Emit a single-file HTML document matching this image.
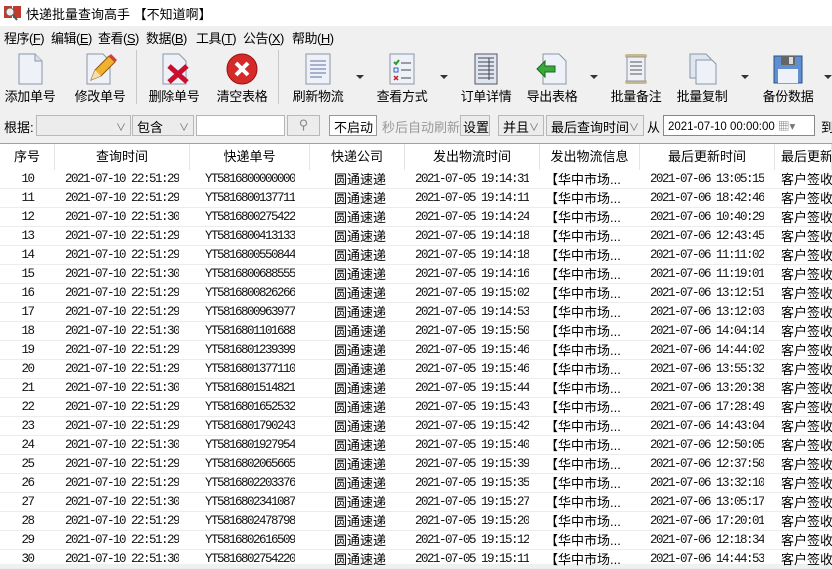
<!DOCTYPE html>
<html><head><meta charset="utf-8"><style>
*{margin:0;padding:0;box-sizing:border-box}
body{width:832px;height:564px;overflow:hidden;background:#f0f0f0;font-family:"Liberation Sans","Noto Sans CJK SC",sans-serif;font-size:12px;color:#000;position:relative}
.abs{position:absolute}
#title{left:0;top:0;width:832px;height:26px;background:#fff}
#title span{position:absolute;left:26px;top:4px;font-size:13px}
#menu{left:0;top:26px;width:832px;height:20px;background:#f0f0f0}
#menu span{position:absolute;top:2px;font-size:13px;letter-spacing:-0.5px}
.tb{position:absolute;top:52px;text-align:center;font-size:13px}
.tb svg{display:block;margin:0 auto}
.tb div{margin-top:0px;white-space:nowrap;letter-spacing:-0.3px}
.sep{position:absolute;top:50px;width:1px;height:54px;background:#c8c8c8}
.arr{position:absolute;top:75px;width:0;height:0;border-left:4px solid transparent;border-right:4px solid transparent;border-top:4px solid #333}
.box{position:absolute;top:115px;height:21px;border:1px solid #b4b4b4;background:#fff;font-size:13px;padding:1px 4px;white-space:nowrap}
.cb{background:#ececec;border-color:#b8b8b8}
.chev{position:absolute;right:4px;top:3px;color:#666;font-size:10px}
#table{left:0;top:143px;width:832px;height:421px;background:#fff;border-top:1px solid #a0a0a0}
.hd{position:absolute;top:0;height:26px;line-height:26px;text-align:center;font-size:13px;border-right:1px solid #e4e4e4;white-space:nowrap;overflow:hidden}
.row{position:absolute;left:0;width:832px;height:19px;border-bottom:1px solid #ececec}
.c{position:absolute;top:0;height:19px;line-height:19px;white-space:nowrap;overflow:hidden;font-size:13px}
.m{font-family:"Liberation Mono","DejaVu Sans Mono",monospace;font-size:12.5px;letter-spacing:-1.5px;color:#111}
</style></head><body>
<div id="title" class="abs">
<svg class="abs" style="left:4px;top:5px" width="18" height="16"><rect x="0" y="1" width="8" height="12" fill="#c0392b"/><rect x="9" y="1" width="8" height="12" fill="#c0392b"/><circle cx="6" cy="7" r="4" fill="#eee" stroke="#666"/><line x1="9" y1="10" x2="13" y2="15" stroke="#555" stroke-width="2"/></svg>
<span>快递批量查询高手 【不知道啊】</span></div>
<div id="menu" class="abs">
<span style="left:4px">程序(<u>F</u>)</span><span style="left:51px">编辑(<u>E</u>)</span><span style="left:98px">查看(<u>S</u>)</span><span style="left:146px">数据(<u>B</u>)</span><span style="left:196px">工具(<u>T</u>)</span><span style="left:243px">公告(<u>X</u>)</span><span style="left:292px">帮助(<u>H</u>)</span></div>

<div class="tb" style="left:4px;width:52px"><svg width="30" height="34"><path d="M4 2h16l7 7v23H4z" fill="#eef2f8" stroke="#8a96a8"/><path d="M20 2v7h7" fill="#d8e0ea" stroke="#8a96a8"/></svg><div>添加单号</div></div>
<div class="tb" style="left:72px;width:56px"><svg width="34" height="34"><path d="M4 2h16l7 7v23H4z" fill="#eef2f8" stroke="#8a96a8"/><path d="M8 28l4-10 14-14 6 6-14 14z" fill="#f0b030" stroke="#8a5a10"/><path d="M26 4l6 6 2-2-6-6z" fill="#d04040"/><path d="M8 28l4-10 6 6z" fill="#f5deb0"/></svg><div>修改单号</div></div>
<div class="sep" style="left:136px"></div>
<div class="tb" style="left:146px;width:56px"><svg width="34" height="34"><path d="M6 2h16l7 7v23H6z" fill="#eef2f8" stroke="#8a96a8"/><path d="M12 14l18 16M30 14L12 30" stroke="#c8102e" stroke-width="5"/></svg><div>删除单号</div></div>
<div class="tb" style="left:214px;width:56px"><svg width="34" height="34"><circle cx="17" cy="17" r="15" fill="#d42a2a" stroke="#9a1010"/><path d="M11 11l12 12M23 11L11 23" stroke="#fff" stroke-width="4"/></svg><div>清空表格</div></div>
<div class="sep" style="left:278px"></div>
<div class="tb" style="left:290px;width:56px"><svg width="30" height="34"><path d="M3 2h24v30H3z" fill="#eef2f8" stroke="#8a96a8"/><path d="M7 9h16M7 13h16M7 17h16M7 21h16M7 25h12" stroke="#6070a0"/></svg><div>刷新物流</div></div>
<div class="arr" style="left:356px"></div>
<div class="tb" style="left:374px;width:56px"><svg width="30" height="34"><path d="M3 2h24v30H3z" fill="#eef2f8" stroke="#8a96a8"/><path d="M7 10l2 2 3-4" stroke="#2a9a2a" stroke-width="2" fill="none"/><rect x="7" y="16" width="4" height="4" fill="none" stroke="#3060c0"/><path d="M7 24l4 4M11 24l-4 4" stroke="#c02020" stroke-width="1.5"/><path d="M14 11h10M14 18h10M14 26h10" stroke="#445"/></svg><div>查看方式</div></div>
<div class="arr" style="left:440px"></div>
<div class="tb" style="left:458px;width:56px"><svg width="30" height="34"><path d="M4 2h22v30H4z" fill="#dfe6f0" stroke="#556"/><path d="M7 6h16M7 10h16M7 14h16M7 18h16M7 22h16M7 26h16M18 6v22" stroke="#445"/></svg><div>订单详情</div></div>
<div class="tb" style="left:524px;width:56px"><svg width="34" height="34"><path d="M8 2h16l7 7v23H8z" fill="#eef2f8" stroke="#8a96a8"/><path d="M2 17l8-8v5h10v6H10v5z" fill="#3aa83a" stroke="#1a6a1a"/></svg><div>导出表格</div></div>
<div class="arr" style="left:590px"></div>
<div class="tb" style="left:608px;width:56px"><svg width="30" height="34"><rect x="4" y="2" width="22" height="4" rx="2" fill="#c9b98a"/><rect x="4" y="28" width="22" height="4" rx="2" fill="#c9b98a"/><rect x="6" y="5" width="18" height="24" fill="#eef0f4" stroke="#8a96a8"/><path d="M9 10h12M9 14h12M9 18h12M9 22h12" stroke="#556"/></svg><div>批量备注</div></div>
<div class="tb" style="left:674px;width:56px"><svg width="30" height="34"><path d="M3 2h16l5 5v19H3z" fill="#dfe6f0" stroke="#8a96a8"/><path d="M9 8h16l4 4v20H9z" fill="#eef2f8" stroke="#8a96a8"/></svg><div>批量复制</div></div>
<div class="arr" style="left:741px"></div>
<div class="tb" style="left:758px;width:60px"><svg width="34" height="34"><path d="M3 4h28v27H3z" fill="#5f8fd0" stroke="#2a4f8a"/><rect x="10" y="4" width="14" height="9" fill="#666"/><rect x="18" y="5" width="4" height="7" fill="#ddd"/><rect x="7" y="17" width="20" height="14" fill="#eef2f8"/></svg><div>备份数据</div></div>
<div class="arr" style="left:824px"></div>

<span class="abs" style="left:4px;top:117px;font-size:13px">根据:</span>
<div class="box cb" style="left:36px;width:95px"><span class="chev">∨</span></div>
<div class="box cb" style="left:132px;width:62px">包含<span class="chev">∨</span></div>
<div class="box" style="left:196px;width:89px"></div>
<div class="box cb" style="left:287px;width:33px;text-align:center;color:#888">⚲</div>
<div class="box" style="left:329px;width:48px;border-color:#999">不启动</div>
<span class="abs" style="left:382px;top:117px;color:#999;font-size:13px">秒后自动刷新</span>
<div class="box cb" style="left:460px;width:30px;padding:1px 2px">设置</div>
<div class="box cb" style="left:498px;width:46px">并且<span class="chev">∨</span></div>
<div class="box cb" style="left:546px;width:98px">最后查询时间<span class="chev">∨</span></div>
<span class="abs" style="left:647px;top:117px;font-size:13px">从</span>
<div class="box" style="left:663px;width:152px;border-color:#888;font-size:11.5px;padding-top:2px">2021-07-10 00:00:00 <span style="color:#777">▦▾</span></div>
<span class="abs" style="left:821px;top:117px;font-size:13px">到</span>

<div id="table" class="abs">
<div class="hd" style="left:0;width:55px">序号</div>
<div class="hd" style="left:55px;width:135px">查询时间</div>
<div class="hd" style="left:190px;width:120px">快递单号</div>
<div class="hd" style="left:310px;width:95px">快递公司</div>
<div class="hd" style="left:405px;width:135px">发出物流时间</div>
<div class="hd" style="left:540px;width:100px">发出物流信息</div>
<div class="hd" style="left:640px;width:135px">最后更新时间</div>
<div class="hd" style="left:775px;width:57px;text-align:left;padding-left:6px">最后更新物流</div>
<div id="rows"></div>
</div>
<script>
var secs=["29","29","30","29","29","30","29","29","30","29","29","30","29","29","30","29","29","30","29","29","30"];
var sends=["19:14:31","19:14:11","19:14:24","19:14:18","19:14:18","19:14:16","19:15:02","19:14:53","19:15:50","19:15:46","19:15:46","19:15:44","19:15:43","19:15:42","19:15:40","19:15:39","19:15:35","19:15:27","19:15:20","19:15:12","19:15:11"];
var lasts=["13:05:15","18:42:46","10:40:29","12:43:45","11:11:02","11:19:01","13:12:51","13:12:03","14:04:14","14:44:02","13:55:32","13:20:38","17:28:49","14:43:04","12:50:05","12:37:50","13:32:10","13:05:17","17:20:01","12:18:34","14:44:53"];
var h="";
for(var i=0;i<21;i++){
var t=26+i*19;
h+='<div class="row" style="top:'+t+'px">'+
'<div class="c m" style="left:0;width:55px;text-align:center">'+(10+i)+'</div>'+
'<div class="c m" style="left:65px">2021-07-10 22:51:'+secs[i]+'</div>'+
'<div class="c m" style="left:205px">YT'+(5816800000000+i*137711)+'</div>'+
'<div class="c" style="left:334px">圆通速递</div>'+
'<div class="c m" style="left:415px">2021-07-05 '+sends[i]+'</div>'+
'<div class="c" style="left:545px">【华中市场...</div>'+
'<div class="c m" style="left:650px">2021-07-06 '+lasts[i]+'</div>'+
'<div class="c" style="left:781px">客户签收,</div></div>';
}
document.getElementById("rows").innerHTML=h;
</script>
</body></html>
